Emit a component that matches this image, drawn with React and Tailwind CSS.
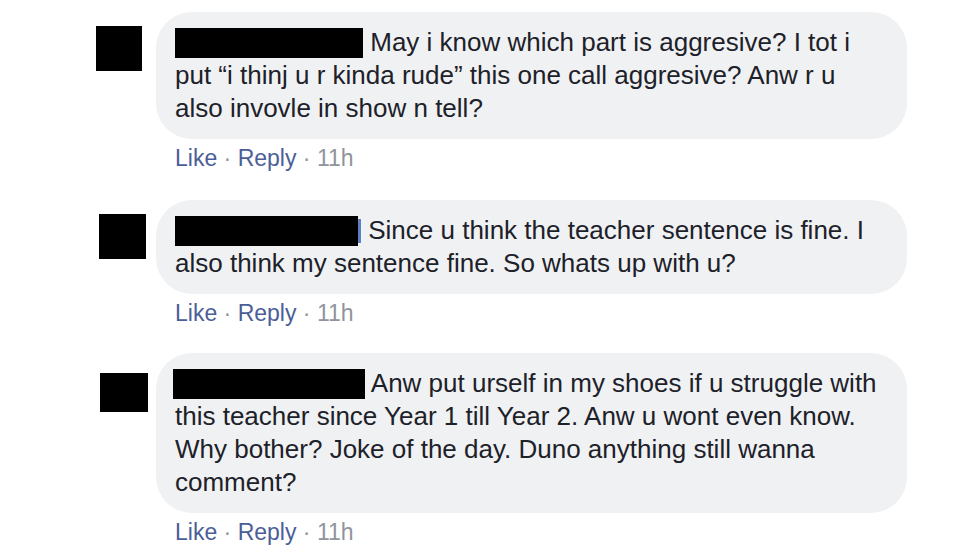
const comments = [
  {
    avatar: "ml-0 mt-[14px] w-[46px] h-[45px]",
    wrap: "mt-0",
    redact: "w-[188px]",
    lines: [
      "May i know which part is aggresive? I tot i",
      "put \u201ci thinj u r kinda rude\u201d this one call aggresive? Anw r u",
      "also invovle in show n tell?",
    ],
  },
  {
    avatar: "ml-[3px] mt-[14px] w-[47px] h-[45px]",
    wrap: "mt-[28px]",
    redact: "w-[183px]",
    peek: true,
    lines: [
      "Since u think the teacher sentence is fine. I",
      "also think my sentence fine. So whats up with u?",
    ],
  },
  {
    avatar: "ml-[4px] mt-[20px] w-[48px] h-[39px]",
    wrap: "mt-[26px]",
    redact: "w-[192px] -ml-[2px]",
    lines: [
      "Anw put urself in my shoes if u struggle with",
      "this teacher since Year 1 till Year 2. Anw u wont even know.",
      "Why bother? Joke of the day. Duno anything still wanna",
      "comment?",
    ],
  },
];

function Comment({ c }) {
  return (
    <div className={`flex ${c.wrap}`}>
      <div className="w-[60px] shrink-0">
        <div className={`bg-black ${c.avatar}`} />
      </div>
      <div className="flex flex-col">
        <div className="w-[751px] rounded-[36px] bg-[#f0f1f3] pl-[19px] pr-[20px] py-[14px] text-[26px] leading-[33px] text-[#1d2129] whitespace-nowrap">
          {c.lines.map((line, i) => (
            <div key={i}>
              {i === 0 && (
                <>
                  <span className={`inline-block h-[30px] bg-black align-[-7px] ${c.redact}`} />
                  {c.peek && <span className="inline-block h-[24px] w-[3px] bg-[#5f7fc4] align-[-4px]" />}{" "}
                </>
              )}
              {line}
            </div>
          ))}
        </div>
        <div className="ml-[19px] mt-[6px] h-[27px] text-[23px] leading-[27px] whitespace-nowrap">
          <span className="text-[#4b5e98]">Like</span>
          <span className="text-[#90949c]"> · </span>
          <span className="text-[#4b5e98]">Reply</span>
          <span className="text-[#90949c]"> · 11h</span>
        </div>
      </div>
    </div>
  );
}

export default function App() {
  return (
    <div className="w-[974px] h-[553px] overflow-hidden bg-white pl-[96px] pt-[12px] font-['Liberation_Sans',Arial,sans-serif]">
      {comments.map((c, i) => (
        <Comment key={i} c={c} />
      ))}
    </div>
  );
}
